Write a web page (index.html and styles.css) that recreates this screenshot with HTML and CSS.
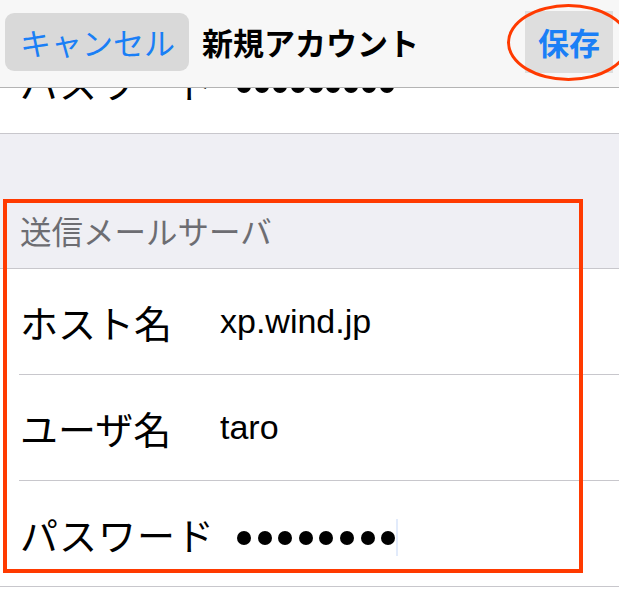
FILE: index.html
```html
<!DOCTYPE html>
<html lang="ja">
<head>
    <meta charset="UTF-8">
    <meta name="viewport" content="width=device-width, initial-scale=1.0">
    <title>新規アカウント</title>
    <link rel="stylesheet" href="styles.css">
</head>
<body>
    <div class="screen">
        <!-- nav bar sits over the scrolled list -->
        <div class="nav">
            <div class="btn-cancel">キャンセル</div>
            <div class="nav-title">新規アカウント</div>
            <div class="btn-save">保存</div>
        </div>

        <div class="content">
            <div class="row row-cut">
                <div class="row-inner">
                    <span class="label label-pw">パスワード</span>
                    <span class="dots dots-tight">
                        <i></i><i></i><i></i><i></i><i></i><i></i><i></i><i></i><i></i>
                    </span>
                </div>
            </div>

            <div class="section-header">送信メールサーバ</div>

            <div class="group">
                <div class="row">
                    <div class="row-inner">
                        <span class="label">ホスト名</span>
                        <span class="value">xp.wind.jp</span>
                    </div>
                </div>
                <div class="row">
                    <div class="row-inner">
                        <span class="label">ユーザ名</span>
                        <span class="value">taro</span>
                    </div>
                </div>
                <div class="row row-last">
                    <div class="row-inner">
                        <span class="label label-pw">パスワード</span>
                        <span class="dots">
                            <i></i><i></i><i></i><i></i><i></i><i></i><i></i><i></i>
                        </span>
                        <span class="cursor"></span>
                    </div>
                </div>
            </div>
        </div>

        <!-- red annotations drawn over the screenshot -->
        <div class="mark-box"></div>
        <div class="mark-ellipse"></div>
    </div>
</body>
</html>
```

FILE: styles.css
```css
body {
    margin: 0;
    background-color: #fff;
    font-family: 'Noto Sans CJK JP', 'Liberation Sans', sans-serif;
    color: #000;
}

.screen {
    position: relative;
    width: 619px;
    height: 589px;
    overflow: hidden;
}

.nav {
    position: absolute;
    top: 0;
    left: 0;
    right: 0;
    height: 88px;
    box-sizing: border-box;
    padding-bottom: 4px;
    background-color: #f7f7f7;
    border-bottom: 1px solid #b4b4b4;
    display: flex;
    align-items: center;
    z-index: 2;
}

.btn-cancel {
    margin-left: 5px;
    width: 169px;
    height: 58px;
    padding-left: 15px;
    background-color: #d9d9d9;
    border-radius: 9px;
    color: #1a7ff6;
    font-size: 31px;
    line-height: 58px;
}

.nav-title {
    margin-left: 13px;
    font-size: 31px;
    font-weight: bold;
}

.btn-save {
    margin-left: auto;
    margin-right: 6px;
    width: 75px;
    height: 62px;
    padding-left: 13px;
    background-color: #dedede;
    color: #1a7ff6;
    font-size: 31px;
    font-weight: bold;
    line-height: 62px;
}

.content {
    padding-top: 28px;
}

.row {
    background-color: #fff;
    padding-left: 19px;
}

.row-inner {
    height: 105px;
    padding-left: 1px;
    border-bottom: 1px solid #c8c7cc;
    display: flex;
    align-items: center;
}

.row-cut {
    border-bottom: 1px solid #c8c7cc;
}

.row-cut .row-inner {
    border-bottom: none;
    height: 102px;
    padding-top: 3px;
}

.row-last .row-inner {
    border-bottom: none;
}

.row-last {
    border-bottom: 1px solid #c8c7cc;
}

.section-header {
    height: 135px;
    box-sizing: border-box;
    background-color: #efeff4;
    border-bottom: 1px solid #c8c7cc;
    color: #6d6d72;
    font-size: 31.5px;
    line-height: 36px;
    padding: 0 0 20px 20px;
    display: flex;
    align-items: flex-end;
}

.label {
    flex: 0 0 200px;
    font-size: 38px;
    line-height: 50px;
}

.label-pw {
    flex: 0 0 auto;
    letter-spacing: 1px;
    margin-right: 22px;
}

.value {
    font-family: 'Liberation Sans', sans-serif;
    font-size: 34px;
}

.dots {
    display: flex;
    gap: 6.6px;
    padding-top: 8px;
}

.dots i {
    display: block;
    width: 14px;
    height: 14px;
    border-radius: 50%;
    background-color: #000;
}

.dots-tight {
    gap: 3.9px;
}

.cursor {
    width: 2px;
    height: 37px;
    margin-left: 1px;
    margin-top: 8px;
    background-color: #e2ebfb;
}

.mark-box {
    position: absolute;
    left: 3px;
    top: 199px;
    width: 580px;
    height: 374px;
    box-sizing: border-box;
    border: 4px solid #ff3a00;
    z-index: 3;
}

.mark-ellipse {
    position: absolute;
    left: 507px;
    top: 4px;
    width: 123px;
    height: 77px;
    box-sizing: border-box;
    border: 3px solid #ff3a00;
    border-radius: 50%;
    z-index: 3;
}
```
